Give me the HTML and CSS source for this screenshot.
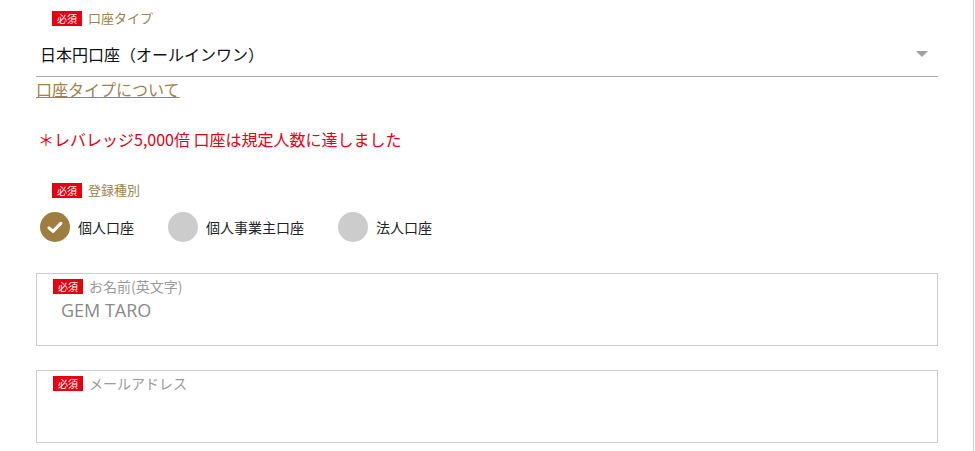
FILE: index.html
```html
<!DOCTYPE html>
<html lang="ja">
<head>
    <meta charset="UTF-8">
    <meta name="viewport" content="width=device-width, initial-scale=1.0">
    <title>口座開設</title>
    <link rel="stylesheet" href="styles.css">
</head>
<body>
    <div class="page">
        <form class="form">
            <div class="field">
                <div class="label-row">
                    <span class="required">必須</span>
                    <span class="label">口座タイプ</span>
                </div>
                <div class="select">
                    <span class="select-value">日本円口座（オールインワン）</span>
                    <span class="select-arrow"></span>
                </div>
                <a href="#" class="help-link">口座タイプについて</a>
            </div>

            <p class="notice">＊レバレッジ5,000倍 口座は規定人数に達しました</p>

            <div class="field">
                <div class="label-row">
                    <span class="required">必須</span>
                    <span class="label">登録種別</span>
                </div>
                <div class="radio-group">
                    <label class="radio checked">
                        <span class="radio-mark">
                            <svg width="16" height="13" viewBox="0 0 16 13"><path d="M2 6.8 L6 10.4 L13.8 2.4" fill="none" stroke="#fff" stroke-width="3" stroke-linecap="round" stroke-linejoin="round"/></svg>
                        </span>
                        個人口座
                    </label>
                    <label class="radio">
                        <span class="radio-mark"></span>
                        個人事業主口座
                    </label>
                    <label class="radio">
                        <span class="radio-mark"></span>
                        法人口座
                    </label>
                </div>
            </div>

            <div class="input-box">
                <div class="label-row">
                    <span class="required">必須</span>
                    <span class="label muted">お名前(英文字)</span>
                </div>
                <div class="input-value">GEM TARO</div>
            </div>

            <div class="input-box">
                <div class="label-row">
                    <span class="required">必須</span>
                    <span class="label muted">メールアドレス</span>
                </div>
                <div class="input-value"></div>
            </div>
        </form>
    </div>
</body>
</html>
```

FILE: styles.css
```css
:root {
    --brand-red: #e60012;
    --gold: #a0824a;
    --border: #cccccc;
    --muted: #9a9a9a;
    --text-color: #222;
}

body {
    margin: 0;
    font-family: "Noto Sans CJK JP", "Noto Sans", sans-serif;
    color: var(--text-color);
    background: #fff;
}

.page {
    width: 973px;
    height: 451px;
    border-right: 1px solid #d0d0d0;
    overflow: hidden;
}

.form {
    width: 902px;
    padding: 9px 0 0 36px;
}

.label-row {
    display: flex;
    align-items: center;
    gap: 6px;
    padding-left: 16px;
    height: 18px;
}

.required {
    background: var(--brand-red);
    color: #fff;
    font-size: 10px;
    line-height: 15px;
    padding: 0 3px;
    width: 24px;
    text-align: center;
}

.label {
    color: var(--gold);
    font-size: 13px;
    line-height: 18px;
}

.label.muted {
    color: var(--muted);
    font-size: 14px;
}

.select {
    display: flex;
    align-items: center;
    justify-content: space-between;
    height: 48px;
    border-bottom: 1px solid #a8a8a8;
    margin-top: 1px;
}

.select-value {
    font-size: 16px;
    padding-left: 4px;
    padding-top: 4px;
    color: #111;
}

.select-arrow {
    width: 0;
    height: 0;
    border-left: 6px solid transparent;
    border-right: 6px solid transparent;
    border-top: 6px solid #a0a0a0;
    margin-right: 10px;
    margin-top: 4px;
}

.help-link {
    display: inline-block;
    color: var(--gold);
    font-size: 16px;
    line-height: 24px;
}

.notice {
    color: var(--brand-red);
    font-size: 16px;
    line-height: 20px;
    margin: 28px 0 32px 2px;
}

.radio-group {
    display: flex;
    align-items: center;
    margin-top: 13px;
    margin-bottom: 31px;
}

.radio {
    display: flex;
    align-items: center;
    gap: 8px;
    font-size: 14px;
    margin: 0 34px 0 4px;
    color: #222;
}

.radio + .radio {
    margin-left: 0;
}

.radio-mark {
    width: 30px;
    height: 30px;
    border-radius: 50%;
    background: #cccccc;
    display: flex;
    align-items: center;
    justify-content: center;
}

.radio.checked .radio-mark {
    background: #9e7d3f;
}

.input-box {
    border: 1px solid var(--border);
    padding-top: 3px;
    box-sizing: border-box;
    height: 73px;
    margin-bottom: 24px;
}

.input-value {
    font-family: "Open Sans", "Noto Sans CJK JP", sans-serif;
    color: #8a8a8a;
    font-size: 18px;
    line-height: 24px;
    padding: 3px 0 0 24px;
}
```
